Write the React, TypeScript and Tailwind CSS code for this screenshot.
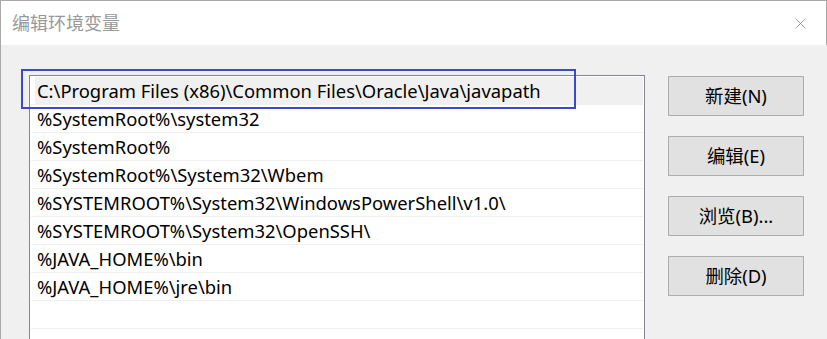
import { X } from "lucide-react";

const paths = [
  "C:\\Program Files (x86)\\Common Files\\Oracle\\Java\\javapath",
  "%SystemRoot%\\system32",
  "%SystemRoot%",
  "%SystemRoot%\\System32\\Wbem",
  "%SYSTEMROOT%\\System32\\WindowsPowerShell\\v1.0\\",
  "%SYSTEMROOT%\\System32\\OpenSSH\\",
  "%JAVA_HOME%\\bin",
  "%JAVA_HOME%\\jre\\bin",
  "",
  "",
];

const buttons = ["新建(N)", "编辑(E)", "浏览(B)...", "删除(D)"];

const font = {
  fontFamily: '"Noto Sans", "Noto Sans CJK SC", sans-serif',
};

export default function App() {
  return (
    <div
      className="flex h-[339px] w-[827px] flex-col overflow-hidden border-l border-t border-[#a9a9a9] bg-white"
      style={font}
    >
      {/* title bar */}
      <div className="flex h-[44px] shrink-0 items-center justify-between border-r border-[#a9a9a9] pl-[11px] pr-[16px]">
        <span className="text-[18px] text-[#999999]">编辑环境变量</span>
        <X size={19} strokeWidth={0.9} className="text-[#7a7a7a]" />
      </div>

      {/* body */}
      <div className="flex flex-1 gap-[23px] bg-[#f0f0f0] pl-[28px] pt-[30px]">
        <div className="relative h-[320px] w-[616px] shrink-0 border border-[#828790] bg-white px-[1px] pt-[1px]">
          {paths.map((p, i) => (
            <div
              key={i}
              className="flex h-[28px] border-b border-[#f0f0f0] text-[18.4px] text-black"
            >
              <div
                className={`ml-[4px] flex flex-1 items-center pl-[2px] pt-[1px] ${
                  i === 0 ? "bg-[#f0f0f0]" : ""
                }`}
              >
                {p}
              </div>
            </div>
          ))}
          {/* highlight box */}
          <div className="absolute left-[-9px] top-[-7px] h-[40px] w-[555px] border-2 border-[#3f48cc]" />
        </div>

        <div className="flex flex-col gap-[20px] pt-[1px]">
          {buttons.map((b) => (
            <div
              key={b}
              className="flex h-[40px] w-[136px] items-center justify-center border border-[#adadad] bg-[#e1e1e1] text-[18.4px] text-black"
            >
              {b}
            </div>
          ))}
        </div>
      </div>
    </div>
  );
}
